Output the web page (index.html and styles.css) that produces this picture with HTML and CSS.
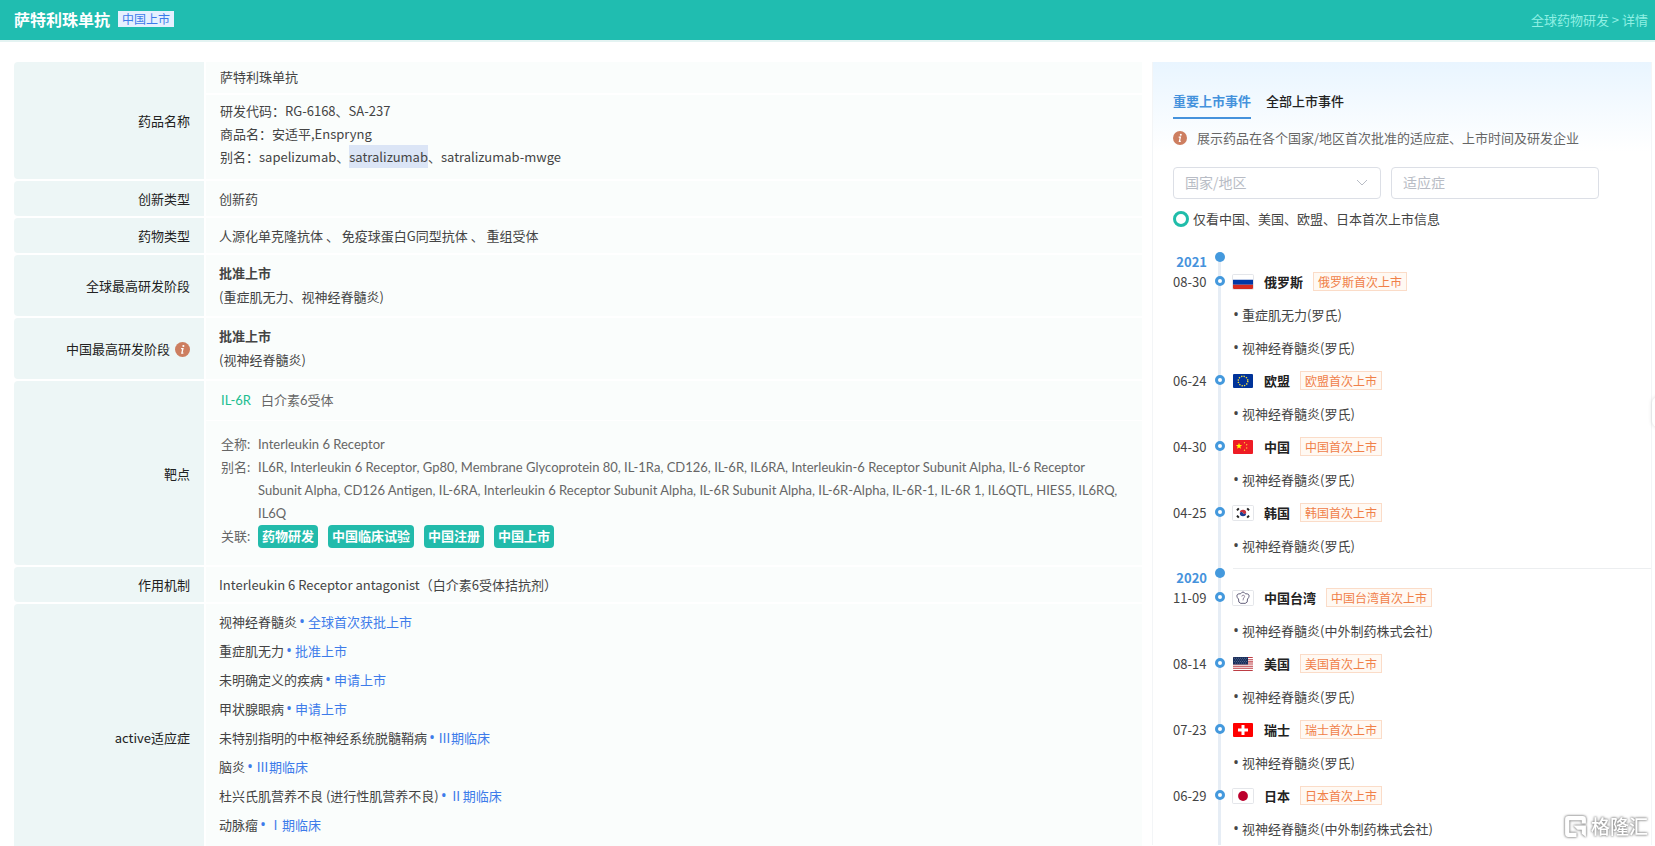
FILE: index.html
```html
<!DOCTYPE html>
<html lang="zh-CN">
<head>
  <meta charset="UTF-8">
  <meta name="viewport" content="width=device-width, initial-scale=1.0">
  <title>萨特利珠单抗 - 全球药物研发</title>
  <link rel="stylesheet" href="styles.css">
</head>
<body>
  <svg class="defs" aria-hidden="true">
    <symbol id="info" viewBox="0 0 14 14">
      <circle cx="7" cy="7" r="7" fill="#cd7e60"/>
      <circle cx="7.8" cy="3.7" r="1" fill="#fff"/>
      <path d="M5.7 6.2h1.7l-1 4.1h1.4" fill="none" stroke="#fff" stroke-width="1.2"/>
    </symbol>
  </svg>

  <header class="topbar">
    <h1>萨特利珠单抗</h1>
    <span class="badge">中国上市</span>
    <nav class="crumbs"><a href="#">全球药物研发</a> &gt; <a href="#">详情</a></nav>
  </header>

  <main class="page">
    <div class="detail">
      <table class="info">
        <tr class="row-name">
          <th scope="row">药品名称</th>
          <td>
            <div class="name-main">萨特利珠单抗</div>
            <div class="name-more">
              <p>研发代码：RG-6168、SA-237</p>
              <p>商品名：安适平,Enspryng</p>
              <p>别名：sapelizumab、<mark>satralizumab</mark>、satralizumab-mwge</p>
            </div>
          </td>
        </tr>
        <tr>
          <th scope="row">创新类型</th>
          <td>创新药</td>
        </tr>
        <tr>
          <th scope="row">药物类型</th>
          <td>人源化单克隆抗体 、 免疫球蛋白G同型抗体 、 重组受体</td>
        </tr>
        <tr class="row-stage">
          <th scope="row">全球最高研发阶段</th>
          <td><strong>批准上市</strong><p>(重症肌无力、视神经脊髓炎)</p></td>
        </tr>
        <tr class="row-stage">
          <th scope="row">中国最高研发阶段<svg class="tip"><use href="#info"/></svg></th>
          <td><strong>批准上市</strong><p>(视神经脊髓炎)</p></td>
        </tr>
        <tr class="row-target">
          <th scope="row">靶点</th>
          <td>
            <div class="target-head"><a href="#">IL-6R</a><span>白介素6受体</span></div>
            <dl class="target-body">
              <dt>全称:</dt>
              <dd>Interleukin 6 Receptor</dd>
              <dt>别名:</dt>
              <dd>IL6R, Interleukin 6 Receptor, Gp80, Membrane Glycoprotein 80, IL-1Ra, CD126, IL-6R, IL6RA, Interleukin-6 Receptor Subunit Alpha, IL-6 Receptor Subunit Alpha, CD126 Antigen, IL-6RA, Interleukin 6 Receptor Subunit Alpha, IL-6R Subunit Alpha, IL-6R-Alpha, IL-6R-1, IL-6R 1, IL6QTL, HIES5, IL6RQ, IL6Q</dd>
              <dt>关联:</dt>
              <dd class="links">
                <a href="#">药物研发</a>
                <a href="#">中国临床试验</a>
                <a href="#">中国注册</a>
                <a href="#">中国上市</a>
              </dd>
            </dl>
          </td>
        </tr>
        <tr>
          <th scope="row">作用机制</th>
          <td>Interleukin 6 Receptor antagonist（白介素6受体拮抗剂）</td>
        </tr>
        <tr class="row-active">
          <th scope="row">active适应症</th>
          <td>
            <ul class="active">
              <li>视神经脊髓炎<a href="#">全球首次获批上市</a></li>
              <li>重症肌无力<a href="#">批准上市</a></li>
              <li>未明确定义的疾病<a href="#">申请上市</a></li>
              <li>甲状腺眼病<a href="#">申请上市</a></li>
              <li>未特别指明的中枢神经系统脱髓鞘病<a href="#">Ⅲ期临床</a></li>
              <li>脑炎<a href="#">Ⅲ期临床</a></li>
              <li>杜兴氏肌营养不良 (进行性肌营养不良)<a href="#">Ⅱ期临床</a></li>
              <li>动脉瘤<a href="#">Ⅰ期临床</a></li>
            </ul>
          </td>
        </tr>
      </table>
    </div>

    <aside class="events">
      <div class="tabs">
        <button type="button" class="tab on">重要上市事件</button>
        <button type="button" class="tab">全部上市事件</button>
      </div>
      <p class="note"><svg class="tip"><use href="#info"/></svg>展示药品在各个国家/地区首次批准的适应症、上市时间及研发企业</p>
      <div class="filters">
        <select class="field" aria-label="国家/地区">
          <option>国家/地区</option>
        </select>
        <input class="field" type="text" placeholder="适应症" aria-label="适应症">
      </div>
      <label class="only"><input type="radio" name="only">仅看中国、美国、欧盟、日本首次上市信息</label>

      <div class="timeline">
        <div class="year first">
          <b>2021</b><i class="axis"></i><span></span>
        </div>
        <div class="event">
          <time>08-30</time><i class="axis"></i>
          <div class="body">
            <div class="head">
              <svg class="flag line" viewBox="0 0 20 14"><path fill="#fff" d="M0 0h20v14H0z"/><path fill="#0039a6" d="M0 4.7h20v5H0z"/><path fill="#d52b1e" d="M0 9.7h20V14H0z"/></svg>
              <b>俄罗斯</b><span class="tag">俄罗斯首次上市</span>
            </div>
            <ul><li>重症肌无力(罗氏)</li><li>视神经脊髓炎(罗氏)</li></ul>
          </div>
        </div>
        <div class="event">
          <time>06-24</time><i class="axis"></i>
          <div class="body">
            <div class="head">
              <svg class="flag" viewBox="0 0 20 14"><path fill="#039" d="M0 0h20v14H0z"/><circle cx="10" cy="7" r="4.8" fill="none" stroke="#f5e13b" stroke-width="1.4" stroke-dasharray="1.3 1.213"/></svg>
              <b>欧盟</b><span class="tag">欧盟首次上市</span>
            </div>
            <ul><li>视神经脊髓炎(罗氏)</li></ul>
          </div>
        </div>
        <div class="event">
          <time>04-30</time><i class="axis"></i>
          <div class="body">
            <div class="head">
              <svg class="flag" viewBox="0 0 20 14"><path fill="#ee1c25" d="M0 0h20v14H0z"/><path fill="#ff0" d="M6 2.8l.8 2.3h2.4L7.3 6.5l.7 2.3-2-1.4-2 1.4.7-2.3-1.9-1.4h2.4z"/><g fill="#fc3"><circle cx="11.5" cy="2.7" r=".7"/><circle cx="13.7" cy="4.8" r=".7"/><circle cx="13.7" cy="8" r=".7"/><circle cx="11.5" cy="10.2" r=".7"/></g></svg>
              <b>中国</b><span class="tag">中国首次上市</span>
            </div>
            <ul><li>视神经脊髓炎(罗氏)</li></ul>
          </div>
        </div>
        <div class="event">
          <time>04-25</time><i class="axis"></i>
          <div class="body">
            <div class="head">
              <svg class="flag line" viewBox="0 0 20 14"><path fill="#fff" d="M0 0h20v14H0z"/><path fill="#c8313e" d="M6.8 7a3.2 3.2 0 0 1 6.4 0c-1 1.800-2.600 1-3.200 0s-2.200-1.800-3.200 0z"/><path fill="#1d3d8f" d="M6.800 7c1-1.800 2.600-1 3.200 0s2.200 1.800 3.200 0a3.200 3.200 0 0 1-6.400 0z"/><path stroke="#222" stroke-width="2" d="M4 4.300l1.800-2M14.200 2.300l1.800 2M4 9.700l1.800 2M14.200 11.700l1.800-2"/></svg>
              <b>韩国</b><span class="tag">韩国首次上市</span>
            </div>
            <ul><li>视神经脊髓炎(罗氏)</li></ul>
          </div>
        </div>
        <div class="year">
          <b>2020</b><i class="axis"></i><span class="rule"></span>
        </div>
        <div class="event">
          <time>11-09</time><i class="axis"></i>
          <div class="body">
            <div class="head">
              <svg class="flag line" viewBox="0 0 20 14"><path fill="#fff" d="M0 0h20v14H0z"/><path fill="none" stroke="#55506e" stroke-width=".9" d="M7.600 2.800Q10-.8 12.400 2.800q3.900-.3 3.700 2.300Q16 6.700 14.500 8q.4 4-2.300 4.400Q10 12.200 7.800 12.400 5.100 12 5.500 8 4 6.700 3.900 5.100 3.700 2.500 7.600 2.800z"/><path fill="none" stroke="#7a6c88" stroke-width=".8" d="M8.800 5.500a1.400 1.400 0 1 1 1.700 1.400L10 9.400"/></svg>
              <b>中国台湾</b><span class="tag">中国台湾首次上市</span>
            </div>
            <ul><li>视神经脊髓炎(中外制药株式会社)</li></ul>
          </div>
        </div>
        <div class="event">
          <time>08-14</time><i class="axis"></i>
          <div class="body">
            <div class="head">
              <svg class="flag" viewBox="0 0 20 14"><path fill="#fff" d="M0 0h20v14H0z"/><path stroke="#bd3d44" stroke-width="1.1" d="M0 .5h20M0 2.700h20M0 4.900h20M0 7h20M0 9.200h20M0 11.300h20M0 13.500h20"/><path fill="#192f5d" d="M0 0h15v7.500H0z"/><path stroke="#b9c0d4" stroke-width=".5" stroke-dasharray=".7 1.300" d="M1 1.300h13M2 2.900h12M1 4.500h13M2 6.100h12"/></svg>
              <b>美国</b><span class="tag">美国首次上市</span>
            </div>
            <ul><li>视神经脊髓炎(罗氏)</li></ul>
          </div>
        </div>
        <div class="event">
          <time>07-23</time><i class="axis"></i>
          <div class="body">
            <div class="head">
              <svg class="flag" viewBox="0 0 20 14"><path fill="#f00" d="M0 0h20v14H0z"/><path fill="#fff" d="M8.500 2h3v3.500H15v3h-3.500V12h-3V8.500H5v-3h3.500z"/></svg>
              <b>瑞士</b><span class="tag">瑞士首次上市</span>
            </div>
            <ul><li>视神经脊髓炎(罗氏)</li></ul>
          </div>
        </div>
        <div class="event">
          <time>06-29</time><i class="axis"></i>
          <div class="body">
            <div class="head">
              <svg class="flag line" viewBox="0 0 20 14"><path fill="#fff" d="M0 0h20v14H0z"/><circle cx="10" cy="7" r="4.900" fill="#bc002d"/></svg>
              <b>日本</b><span class="tag">日本首次上市</span>
            </div>
            <ul><li>视神经脊髓炎(中外制药株式会社)</li></ul>
          </div>
        </div>
      </div>
    </aside>
  </main>

  <div class="side-handle"></div>
  <div class="watermark">
    <svg viewBox="0 0 24 24"><path d="M22 9V5q0-3-3-3H5Q2 2 2 5v14q0 3 3 3h8v-4H6V6h12v3zM10 11h12v11l-4-3v-4h-4z"/></svg>
    <span>格隆汇</span>
  </div>
</body>
</html>
```
FILE: styles.css
```css
*,
*::before {
  box-sizing: border-box;
}
body {
  margin: 0;
  height: 100vh;
  overflow: hidden;
  background: #fff;
  color: #444;
  font-family: "Noto Sans CJK SC", sans-serif;
  font-size: 13px;
  line-height: 23px;
}
h1, p, ul, dl, dd {
  margin: 0;
  padding: 0;
}
ul {
  list-style: none;
}
a {
  color: inherit;
  text-decoration: none;
}
.defs {
  display: none;
}
.tip {
  width: 14px;
  height: 14px;
  flex: none;
}

/* header */
.topbar {
  display: flex;
  align-items: center;
  height: 42px;
  padding: 0 7px 2px 14px;
  background: #20bdb0;
  border-bottom: 2px solid #e4f3f2;
  color: #fff;
}
.topbar h1 {
  font-size: 16px;
}
.badge {
  margin-left: 8px;
  padding: 0 4px;
  background: #e5f0ff;
  color: #3d7bea;
  font-size: 12px;
  line-height: 16px;
}
.crumbs {
  margin-left: auto;
  color: #8ff0e4;
}

.page {
  display: flex;
  align-items: flex-start;
  gap: 8px;
  padding: 18px 3px 0 12px;
}
.detail {
  flex: 1;
}

/* detail table */
.info {
  width: 100%;
  border-collapse: separate;
  border-spacing: 2px;
}
.info th {
  width: 190px;
  height: 35px;
  padding: 0 14px;
  background: #edf6f6;
  border-radius: 4px 0 0 4px;
  color: #222;
  font-weight: 400;
  text-align: right;
}
.info td {
  padding: 0 13px;
  background: #fafdfc;
}
.info th .tip {
  width: 15px;
  height: 15px;
  margin-left: 5px;
  vertical-align: -3px;
}
.info .row-name td,
.info .row-target td {
  padding: 0;
}
.name-main {
  padding: 3px 14px 5px;
  border-bottom: 2px solid #fff;
}
.name-more {
  padding: 4px 14px 11px;
}
mark {
  display: inline-block;
  background: #dbe5f6;
  color: inherit;
}
.row-stage th {
  height: 61px;
}
.info .row-stage td {
  padding-bottom: 2px;
  line-height: 24px;
}
.row-target {
  color: #666;
  font-family: Lato, "Noto Sans CJK SC", sans-serif;
}
.row-target th {
  font-family: "Noto Sans CJK SC", sans-serif;
}
.target-head {
  display: flex;
  gap: 10px;
  padding: 8px 15px;
  border-bottom: 1px solid #fff;
}
.target-head a {
  color: #20bd8f;
}
.target-body {
  display: grid;
  grid-template-columns: 37px 1fr;
  padding: 12px 15px 17px;
}
.links {
  display: flex;
  gap: 10px;
}
.links a {
  padding: 0 4px;
  border-radius: 4px;
  background: #22bbab;
  color: #fff;
  font-weight: 700;
  line-height: 22px;
}
.info .row-active td {
  padding: 3px 13px 32px;
}
.active {
  line-height: 29px;
}
.active a {
  color: #3d7bea;
}
.active a::before {
  content: "•";
  margin: 0 3px 0 2px;
  font: 16px/0 "Open Sans", sans-serif;
}

/* launch events */
.events {
  width: 500px;
  margin-top: 2px;
  padding: 27px 0 0 20px;
  border: solid #f3f5f7;
  border-width: 0 1px;
  background: linear-gradient(#e9f5ff, #fff 90px);
}
.tabs {
  display: flex;
  gap: 15px;
}
.tab {
  padding: 0 0 5px;
  border: 0;
  border-bottom: 2px solid transparent;
  background: none;
  color: #222;
  font: 500 13px/23px "Noto Sans CJK SC", sans-serif;
}
.tab.on {
  border-color: #4592dc;
  color: #4592dc;
  font-weight: 700;
}
.note {
  display: flex;
  align-items: center;
  gap: 10px;
  margin: 7px 0 18px;
  color: #666;
}
.filters {
  display: flex;
  gap: 10px;
}
.field {
  width: 208px;
  height: 32px;
  padding: 0 11px 2px;
  border: 1px solid #dcdfe6;
  border-radius: 4px;
  background: #fff;
  color: #b8bcc5;
  font: 14px "Noto Sans CJK SC", sans-serif;
}
.field::placeholder {
  color: #b8bcc5;
}
select.field {
  appearance: none;
  background: #fff url("data:image/svg+xml,%3Csvg xmlns='http://www.w3.org/2000/svg' width='12' height='8'%3E%3Cpath d='M1 1l5 5 5-5' fill='none' stroke='%23b8bcc5'/%3E%3C/svg%3E") no-repeat right 12px center;
}
.only {
  display: flex;
  align-items: center;
  gap: 4px;
  margin-top: 8px;
}
.only input {
  appearance: none;
  width: 16px;
  height: 16px;
  margin: 0;
  border: 3px solid #20bdaa;
  border-radius: 50%;
}

.timeline {
  margin-top: 16px;
}
.year,
.event {
  display: grid;
  grid-template-columns: 34px 26px 1fr;
}
.year {
  height: 19px;
}
.year b {
  padding-top: 4px;
  color: #4592dc;
  text-align: right;
}
.axis {
  padding: 6px 8px 0;
  background: linear-gradient(#e6edf5, #e6edf5) no-repeat 11px 0 / 3px 100%;
}
.first .axis {
  background-position-y: 9px;
}
.axis::before {
  content: "";
  display: block;
  height: 10px;
  border-radius: 50%;
  background: #4499dd;
}
.event .axis {
  padding-top: 11px;
}
.event .axis::before {
  border: 3px solid #4499dd;
  background: #fff;
}
.rule {
  height: 1px;
  margin-top: 6px;
  background: #eceef0;
}
time,
.head,
.event li {
  line-height: 33px;
}
.head {
  display: flex;
  align-items: center;
  height: 33px;
}
.head b {
  margin: 0 10px 0 11px;
  color: #222;
}
.flag {
  width: 20px;
  height: 14px;
  border-radius: 1px;
}
.flag.line {
  box-shadow: 0 0 0 1px #e4e6ea;
}
.tag {
  padding: 0 4px;
  border: 1px solid #fbdcc8;
  background: #fff9f3;
  color: #f08048;
  font-size: 12px;
  line-height: 17px;
}
.event li::before {
  content: "•";
  margin-right: 3px;
  font: 16px/0 "Open Sans", sans-serif;
}

/* floating bits */
.side-handle {
  position: absolute;
  top: 397px;
  right: -20px;
  width: 23px;
  height: 30px;
  border-radius: 6px;
  background: #fff;
  box-shadow: 0 0 4px rgba(0, 0, 0, .15);
}
.watermark {
  position: absolute;
  right: 7px;
  bottom: 7px;
  display: flex;
  align-items: center;
  gap: 3px;
  color: #fff;
  font-size: 19px;
  font-weight: 500;
  line-height: 26px;
  filter: drop-shadow(0 0 1px #888) drop-shadow(0 0 1px #aaa);
}
.watermark svg {
  width: 25px;
  height: 25px;
  fill: #fff;
}
```
